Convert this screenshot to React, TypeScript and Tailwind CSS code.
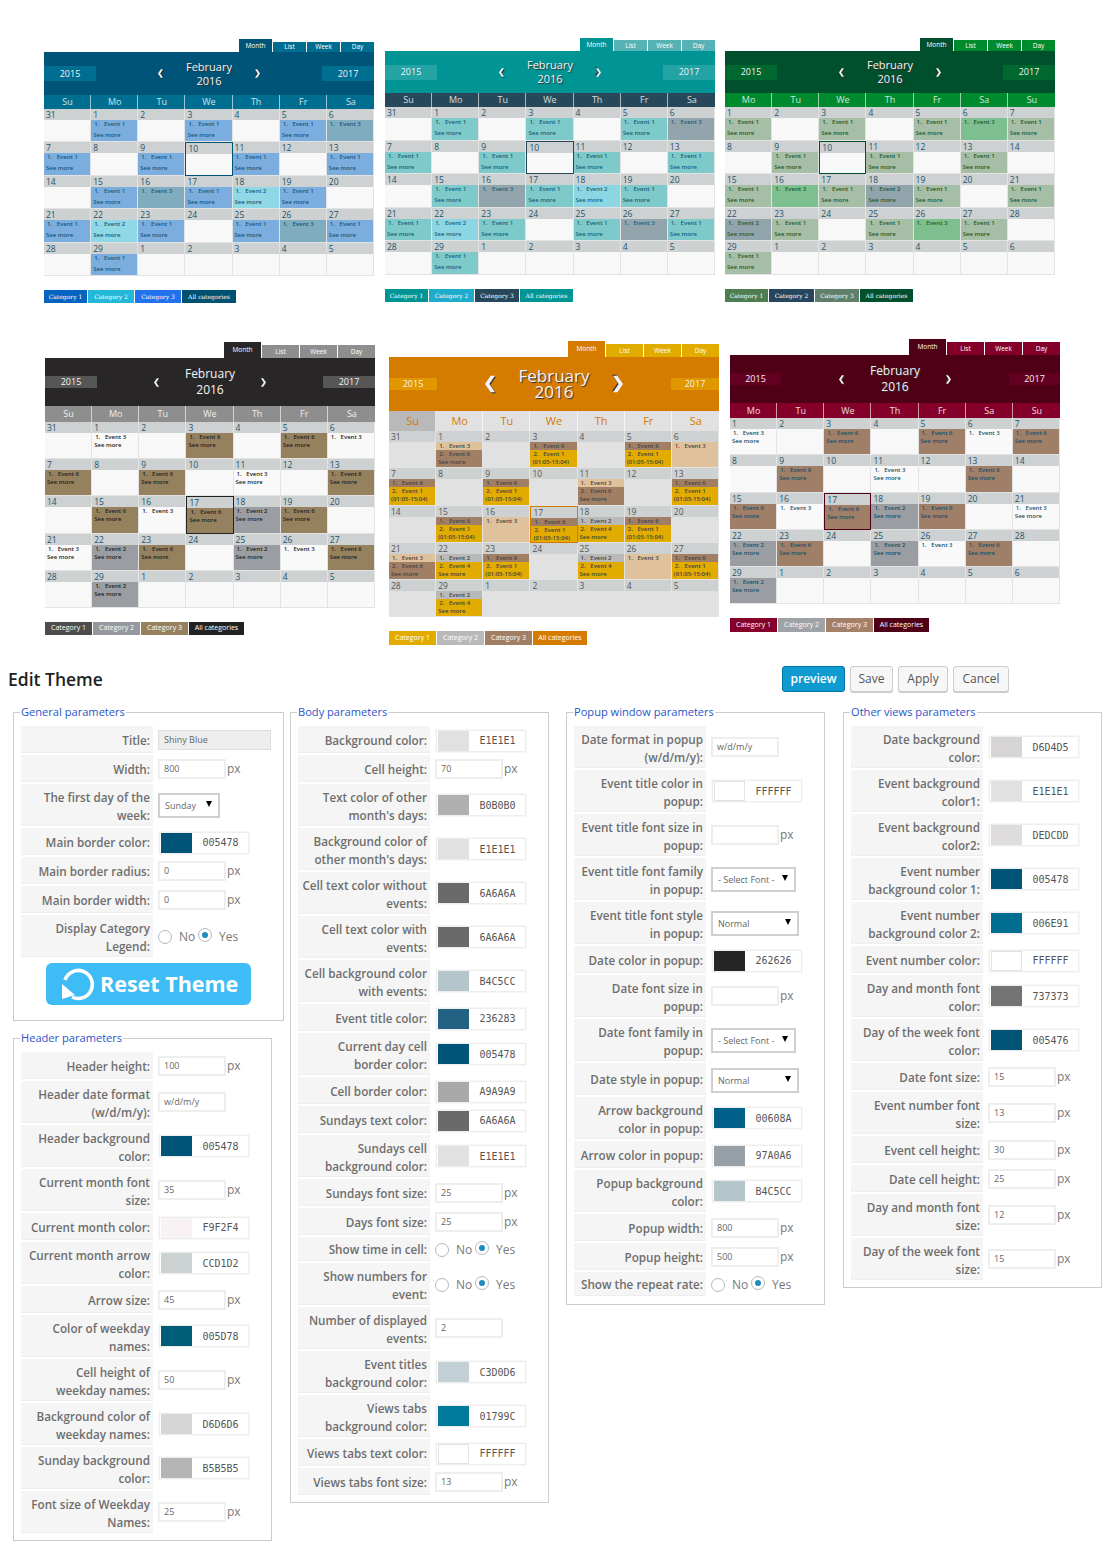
import { useMemo, type ReactNode } from 'react';

const openSans = "[font-family:'Open_Sans',sans-serif]";
const serifLegend = "[font-family:'DejaVu_Serif',serif] text-[6px]";
const sansLegend = "[font-family:'Open_Sans',sans-serif] text-[7px]";

type Theme = {
  id: string;
  place: string;
  firstDay: 'su' | 'mo';
  current: number;
  variant: 'plain' | 'dual';
  events: 'a' | 'b';
  tabRow: string;
  tabActive: string;
  tab: string;
  header: string;
  year: string;
  arrows: string;
  arrow: string;
  title: string;
  week: string;
  weekText: string;
  sunday?: string;
  cell: string;
  cellH: string;
  dateText: string;
  eventText: string;
  currentBorder: string;
  colors: Record<number, string>;
  legendFont: string;
  legendMt: string;
  legend: { label: string; cls: string }[];
};

const THEMES: Theme[] = [
  {
    id: 'blue', place: 'ml-[44px] mt-[39px]', firstDay: 'su', current: 10, variant: 'plain', events: 'a',
    tabRow: 'h-[13px]', tabActive: 'w-[33px] h-[13px] bg-[#005478] text-white', tab: 'w-[33px] h-[10px] bg-[#006e91] text-white',
    header: 'h-[43px] bg-[#005478]', year: 'w-[52px] h-[15px] bg-[#006e91]', arrows: 'w-[102px]', arrow: 'w-[5px] h-[9px]',
    title: 'text-[11px] leading-[14px]', week: 'h-[13.5px] bg-[#006e91]', weekText: 'text-white/80', cell: 'bg-[#f8f8f8]', cellH: 'h-[33.6px]',
    dateText: 'text-[#22536b]', eventText: 'text-[#17587a]', currentBorder: 'border-[#005478]',
    colors: { 1: 'bg-[#7badde]', 2: 'bg-[#8fd8e5]', 3: 'bg-[#7fadbf]' },
    legendFont: serifLegend, legendMt: 'mt-[14px] h-[13px]',
    legend: [
      { label: 'Category 1', cls: 'w-[43px] bg-[#0563c1]' }, { label: 'Category 2', cls: 'w-[46px] bg-[#23b7d8]' },
      { label: 'Category 3', cls: 'w-[46px] bg-[#2272ee]' }, { label: 'All categories', cls: 'w-[54px] bg-[#00506f]' },
    ],
  },
  {
    id: 'teal', place: 'ml-[11px] mt-[38px]', firstDay: 'su', current: 10, variant: 'plain', events: 'a',
    tabRow: 'h-[13px]', tabActive: 'w-[33px] h-[13px] bg-[#009494] text-white', tab: 'w-[33px] h-[11px] bg-[#55b2b5] text-white',
    header: 'h-[42px] bg-[#009494]', year: 'w-[52px] h-[15px] bg-[#23a3a4]', arrows: 'w-[102px]', arrow: 'w-[5px] h-[9px]',
    title: 'text-[11px] leading-[14px]', week: 'h-[14px] bg-[#27485a]', weekText: 'text-white/80', cell: 'bg-[#f8f8f8]', cellH: 'h-[33.6px]',
    dateText: 'text-[#22536b]', eventText: 'text-[#17607a]', currentBorder: 'border-[#26475a]',
    colors: { 1: 'bg-[#7ecaca]', 2: 'bg-[#8cd6e4]', 3: 'bg-[#92a4ac]' },
    legendFont: serifLegend, legendMt: 'mt-[14px] h-[13px]',
    legend: [
      { label: 'Category 1', cls: 'w-[43px] bg-[#009494]' }, { label: 'Category 2', cls: 'w-[45px] bg-[#1eaccd]' },
      { label: 'Category 3', cls: 'w-[44px] bg-[#26475a]' }, { label: 'All categories', cls: 'w-[53px] bg-[#009494]' },
    ],
  },
  {
    id: 'green', place: 'ml-[10px] mt-[38px]', firstDay: 'mo', current: 10, variant: 'plain', events: 'a',
    tabRow: 'h-[13px]', tabActive: 'w-[33px] h-[13px] bg-[#004f2d] text-white', tab: 'w-[33px] h-[11px] bg-[#008a2e] text-white',
    header: 'h-[42px] bg-[#004f2d]', year: 'w-[52px] h-[15px] bg-[#00682e]', arrows: 'w-[102px]', arrow: 'w-[5px] h-[9px]',
    title: 'text-[11px] leading-[14px]', week: 'h-[14px] bg-[#008a2e]', weekText: 'text-white/80', cell: 'bg-[#f8f8f8]', cellH: 'h-[33.6px]',
    dateText: 'text-[#22536b]', eventText: 'text-[#1d5a2a]', currentBorder: 'border-[#004f2d]',
    colors: { 1: 'bg-[#a6bda6]', 2: 'bg-[#91a4ac]', 3: 'bg-[#7dbf8e]' },
    legendFont: serifLegend, legendMt: 'mt-[14px] h-[13px]',
    legend: [
      { label: 'Category 1', cls: 'w-[43px] bg-[#4d7d50]' }, { label: 'Category 2', cls: 'w-[45px] bg-[#24475e]' },
      { label: 'Category 3', cls: 'w-[44px] bg-[#5f7f69]' }, { label: 'All categories', cls: 'w-[53px] bg-[#004f2d]' },
    ],
  },
  {
    id: 'dark', place: 'ml-[45px] mt-[3px]', firstDay: 'su', current: 17, variant: 'plain', events: 'b',
    tabRow: 'h-[16px]', tabActive: 'w-[37px] h-[16px] bg-[#282627] text-white', tab: 'w-[37px] h-[13px] bg-[#8e8e8e] text-white',
    header: 'h-[48px] bg-[#282627]', year: 'w-[52px] h-[12px] bg-[#565656]', arrows: 'w-[112px]', arrow: 'w-[5px] h-[9px]',
    title: 'text-[12px] leading-[16px]', week: 'h-[16px] bg-[#8e8e8e]', weekText: 'text-white/85', cell: 'bg-[#f8f8f8]', cellH: 'h-[37.2px]',
    dateText: 'text-[#22536b]', eventText: 'text-[#222222]', currentBorder: 'border-[#222222]',
    colors: { 2: 'bg-[#9a9ea2]', 3: 'bg-[#f9f9f9]', 6: 'bg-[#96815e]' },
    legendFont: sansLegend, legendMt: 'mt-[14px] h-[13px]',
    legend: [
      { label: 'Category 1', cls: 'w-[47px] bg-[#4d4d4d]' }, { label: 'Category 2', cls: 'w-[47px] bg-[#95999d]' },
      { label: 'Category 3', cls: 'w-[47px] bg-[#96815e]' }, { label: 'All categories', cls: 'w-[55px] bg-[#222222]' },
    ],
  },
  {
    id: 'orange', place: 'ml-[14px] mt-[2px]', firstDay: 'su', current: 17, variant: 'dual', events: 'b',
    tabRow: 'h-[16px]', tabActive: 'w-[37px] h-[16px] bg-[#d57c00] text-white', tab: 'w-[37px] h-[13px] bg-[#e1ab00] text-white',
    header: 'h-[54px] bg-[#d57c00]', year: 'w-[48px] h-[12px] bg-[#e19700]', arrows: 'w-[138px]', arrow: 'w-[10px] h-[18px]',
    title: 'text-[17px] leading-[16px]', week: 'h-[20px] bg-[#e1e1e1]', weekText: 'text-[#d57c00] text-[11px]', sunday: 'bg-[#b9b9b9]', cell: 'bg-[#e1e1e1]', cellH: 'h-[37.3px]',
    dateText: 'text-[#555555]', eventText: 'text-[#444444]', currentBorder: 'border-[#d57c00]',
    colors: { 1: 'bg-[#e1ab00]', 2: 'bg-[#b9b9b9]', 3: 'bg-[#dfc29b]', 4: 'bg-[#e1ab00]', 6: 'bg-[#a07f65]' },
    legendFont: sansLegend, legendMt: 'mt-[14px] h-[14px]',
    legend: [
      { label: 'Category 1', cls: 'w-[47px] bg-[#e1ab00]' }, { label: 'Category 2', cls: 'w-[47px] bg-[#b9b9b9]' },
      { label: 'Category 3', cls: 'w-[47px] bg-[#a07f65]' }, { label: 'All categories', cls: 'w-[54px] bg-[#d57c00]' },
    ],
  },
  {
    id: 'wine', place: 'ml-[11px] mt-0', firstDay: 'mo', current: 17, variant: 'plain', events: 'b',
    tabRow: 'h-[16px]', tabActive: 'w-[37px] h-[16px] bg-[#4f0016] text-white', tab: 'w-[37px] h-[13px] bg-[#84002a] text-white',
    header: 'h-[48px] bg-[#4f0016]', year: 'w-[51px] h-[12px] bg-[#630021]', arrows: 'w-[112px]', arrow: 'w-[5px] h-[9px]',
    title: 'text-[12px] leading-[16px]', week: 'h-[15px] bg-[#84002a]', weekText: 'text-white/85', cell: 'bg-[#f8f8f8]', cellH: 'h-[37.3px]',
    dateText: 'text-[#22536b]', eventText: 'text-[#15506b]', currentBorder: 'border-[#4f0016]',
    colors: { 2: 'bg-[#9a9ea2]', 3: 'bg-[#f9f9f9]', 6: 'bg-[#9f7f67]' },
    legendFont: sansLegend, legendMt: 'mt-[14px] h-[14px]',
    legend: [
      { label: 'Category 1', cls: 'w-[47px] bg-[#84002a]' }, { label: 'Category 2', cls: 'w-[47px] bg-[#9fa3a7]' },
      { label: 'Category 3', cls: 'w-[47px] bg-[#a58068]' }, { label: 'All categories', cls: 'w-[55px] bg-[#4f0016]' },
    ],
  },
];

const EVENTS_A: Record<number, number> = { 1: 1, 3: 1, 5: 1, 6: 3, 7: 1, 9: 1, 11: 1, 13: 1, 15: 1, 16: 3, 17: 1, 18: 2, 19: 1, 21: 1, 22: 2, 23: 1, 25: 1, 26: 3, 27: 1, 29: 1 };
const EVENTS_B: Record<number, number> = { 1: 3, 3: 6, 5: 6, 6: 3, 7: 6, 9: 6, 11: 3, 13: 6, 15: 6, 16: 3, 17: 6, 18: 2, 19: 6, 21: 3, 22: 2, 23: 6, 25: 2, 26: 3, 27: 6, 29: 2 };
const SECOND: Record<number, number> = { 3: 6, 6: 1, 2: 4 };
// these days hold one event only, so there is nothing to "see more" of
const SINGLE_DAYS = [6, 16, 26];

const Arrow = ({ cls, flip }: { cls: string; flip?: boolean }) => (
  <svg viewBox="0 0 6 10" className={`${cls} ${flip ? 'rotate-180' : ''} [filter:drop-shadow(1px_1px_0_#333)]`}>
    <path d="M6 0 2.6 5 6 10H3.4L0 5 3.4 0Z" fill="#f4f2f4" />
  </svg>
);

const PlainEvent = ({ theme, day }: { theme: Theme; day: number }) => {
  const ev = (theme.events === 'a' ? EVENTS_A : EVENTS_B)[day];
  const roomy = theme.events === 'a';
  return (
    <div className={`h-full ${theme.colors[ev]} ${theme.eventText} pl-[2px] text-[6px] font-semibold leading-[8px]`}>
      <div className="pl-[1px]">1.&nbsp;&nbsp;&nbsp;Event {ev}</div>
      {!SINGLE_DAYS.includes(day) && <div className={roomy ? 'mt-[3px]' : ''}>See more</div>}
    </div>
  );
};

const DualEvent = ({ theme, day }: { theme: Theme; day: number }) => {
  const ev = EVENTS_B[day];
  if (SINGLE_DAYS.includes(day)) {
    return <div className={`h-full ${theme.colors[3]} ${theme.eventText} pl-[3px] text-[6px] font-semibold leading-[8px]`}>1.&nbsp;&nbsp;&nbsp;Event 3</div>;
  }
  const next = SECOND[ev];
  return (
    <div className={`flex h-full flex-col ${theme.eventText} text-[6px] font-semibold leading-[8px]`}>
      <div className={`h-[8px] pl-[3px] ${theme.colors[ev]}`}>1.&nbsp;&nbsp;&nbsp;Event {ev}</div>
      <div className={`flex-1 pl-[3px] ${theme.colors[next]}`}>
        2.&nbsp;&nbsp;&nbsp;Event {next}
        <div className="-ml-[1px]">{next === 1 ? '(01:05-15:04)' : 'See more'}</div>
      </div>
    </div>
  );
};

const Calendar = ({ theme }: { theme: Theme }) => {
  const weekdays = theme.firstDay === 'su' ? ['Su', 'Mo', 'Tu', 'We', 'Th', 'Fr', 'Sa'] : ['Mo', 'Tu', 'We', 'Th', 'Fr', 'Sa', 'Su'];

  const days = useMemo(() => {
    const list: { day: number; inMonth: boolean }[] = [];
    if (theme.firstDay === 'su') list.push({ day: 31, inMonth: false });
    for (let d = 1; d <= 29; d++) list.push({ day: d, inMonth: true });
    let n = 1;
    while (list.length < 35) list.push({ day: n++, inMonth: false });
    return list;
  }, [theme.firstDay]);

  const map = theme.events === 'a' ? EVENTS_A : EVENTS_B;

  return (
    <div className={`w-[330px] shrink-0 ${theme.place} ${openSans}`}>
      <div className={`flex items-end justify-end gap-px ${theme.tabRow}`}>
        {['Month', 'List', 'Week', 'Day'].map((t, i) => (
          <div key={t} className={`flex items-center justify-center text-[6.5px] ${i === 0 ? theme.tabActive : theme.tab}`}>{t}</div>
        ))}
      </div>
      <div className={`flex items-center justify-between text-[#f4f2f4] ${theme.header}`}>
        <div className={`flex items-center justify-center text-[9px] ${theme.year}`}>2015</div>
        <div className={`flex items-center justify-between ${theme.arrows}`}>
          <Arrow cls={theme.arrow} />
          <div className={`text-center [text-shadow:1px_1px_1px_#333] ${theme.title}`}>February<br />2016</div>
          <Arrow cls={theme.arrow} flip />
        </div>
        <div className={`flex items-center justify-center text-[9px] ${theme.year}`}>2017</div>
      </div>
      <div className={`grid grid-cols-7 ${theme.week}`}>
        {weekdays.map((w) => (
          <div key={w} className={`flex items-center justify-center border-r border-white/60 pl-[1px] text-[9px] last:border-r-0 ${theme.weekText} ${w === 'Su' && theme.sunday ? theme.sunday : ''}`}>{w}</div>
        ))}
      </div>
      <div className="grid grid-cols-7">
        {days.map(({ day, inMonth }, i) => {
          const isCurrent = inMonth && day === theme.current;
          const hasEvent = inMonth && map[day] !== undefined;
          return (
            <div key={i} className={`flex flex-col ${theme.cellH} ${theme.cell} ${isCurrent ? `border ${theme.currentBorder}` : 'border-b border-r border-[#e3e3e3]'}`}>
              <div className={`h-[11px] shrink-0 bg-[#cdd1d2] pl-[2px] text-[8.5px] leading-[11px] ${theme.dateText}`}>{day}</div>
              <div className="min-h-0 flex-1">
                {hasEvent && (theme.variant === 'dual' ? <DualEvent theme={theme} day={day} /> : <PlainEvent theme={theme} day={day} />)}
              </div>
            </div>
          );
        })}
      </div>
      <div className={`flex gap-px ${theme.legendMt}`}>
        {theme.legend.map((l) => (
          <div key={l.label} className={`flex items-center justify-center text-white ${l.cls} ${theme.legendFont}`}>{l.label}</div>
        ))}
      </div>
    </div>
  );
};

type Field =
  | { label: string; kind: 'text'; value?: string; px?: boolean; w?: string; short?: boolean }
  | { label: string; kind: 'color'; value: string; swatch: string }
  | { label: string; kind: 'select'; value: string; w: string; tall?: boolean }
  | { label: string; kind: 'radio'; short?: boolean };

const c = (label: string, value: string, swatch: string): Field => ({ label, kind: 'color', value, swatch });
const t = (label: string, value = ''): Field => ({ label, kind: 'text', value, px: true });

const GENERAL: Field[] = [
  { label: 'Title:', kind: 'text', value: 'Shiny Blue', w: 'title' },
  t('Width:', '800'),
  { label: 'The first day of the\nweek:', kind: 'select', value: 'Sunday', w: 'w-[62px]' },
  c('Main border color:', '005478', 'bg-[#005478]'),
  t('Main border radius:', '0'),
  t('Main border width:', '0'),
  { label: 'Display Category\nLegend:', kind: 'radio' },
];

const HEADER: Field[] = [
  t('Header height:', '100'),
  { label: 'Header date format\n(w/d/m/y):', kind: 'text', value: 'w/d/m/y' },
  c('Header background\ncolor:', '005478', 'bg-[#005478]'),
  t('Current month font\nsize:', '35'),
  c('Current month color:', 'F9F2F4', 'bg-[#f9f2f4]'),
  c('Current month arrow\ncolor:', 'CCD1D2', 'bg-[#ccd1d2]'),
  t('Arrow size:', '45'),
  c('Color of weekday\nnames:', '005D78', 'bg-[#005d78]'),
  t('Cell height of\nweekday names:', '50'),
  c('Background color of\nweekday names:', 'D6D6D6', 'bg-[#d6d6d6]'),
  c('Sunday background\ncolor:', 'B5B5B5', 'bg-[#b5b5b5]'),
  t('Font size of Weekday\nNames:', '25'),
];

const BODY: Field[] = [
  c('Background color:', 'E1E1E1', 'bg-[#e1e1e1]'),
  t('Cell height:', '70'),
  c('Text color of other\nmonth\'s days:', 'B0B0B0', 'bg-[#b0b0b0]'),
  c('Background color of\nother month\'s days:', 'E1E1E1', 'bg-[#e1e1e1]'),
  c('Cell text color without\nevents:', '6A6A6A', 'bg-[#6a6a6a]'),
  c('Cell text color with\nevents:', '6A6A6A', 'bg-[#6a6a6a]'),
  c('Cell background color\nwith events:', 'B4C5CC', 'bg-[#b4c5cc]'),
  c('Event title color:', '236283', 'bg-[#236283]'),
  c('Current day cell\nborder color:', '005478', 'bg-[#005478]'),
  c('Cell border color:', 'A9A9A9', 'bg-[#a9a9a9]'),
  c('Sundays text color:', '6A6A6A', 'bg-[#6a6a6a]'),
  c('Sundays cell\nbackground color:', 'E1E1E1', 'bg-[#e1e1e1]'),
  t('Sundays font size:', '25'),
  t('Days font size:', '25'),
  { label: 'Show time in cell:', kind: 'radio', short: true },
  { label: 'Show numbers for\nevent:', kind: 'radio' },
  { label: 'Number of displayed\nevents:', kind: 'text', value: '2' },
  c('Event titles\nbackground color:', 'C3D0D6', 'bg-[#c3d0d6]'),
  c('Views tabs\nbackground color:', '01799C', 'bg-[#01799c]'),
  c('Views tabs text color:', 'FFFFFF', 'bg-white border border-[#e2e2e2]'),
  t('Views tabs font size:', '13'),
];

const POPUP: Field[] = [
  { label: 'Date format in popup\n(w/d/m/y):', kind: 'text', value: 'w/d/m/y' },
  c('Event title color in\npopup:', 'FFFFFF', 'bg-white border border-[#e2e2e2]'),
  t('Event title font size in\npopup:'),
  { label: 'Event title font family\nin popup:', kind: 'select', value: '- Select Font -', w: 'w-[85px]' },
  { label: 'Event title font style\nin popup:', kind: 'select', value: 'Normal', w: 'w-[88px]' },
  c('Date color in popup:', '262626', 'bg-[#262626]'),
  t('Date font size in\npopup:'),
  { label: 'Date font family in\npopup:', kind: 'select', value: '- Select Font -', w: 'w-[85px]' },
  { label: 'Date style in popup:', kind: 'select', value: 'Normal', w: 'w-[88px]', tall: true },
  c('Arrow background\ncolor in popup:', '00608A', 'bg-[#00608a]'),
  c('Arrow color in popup:', '97A0A6', 'bg-[#97a0a6]'),
  c('Popup background\ncolor:', 'B4C5CC', 'bg-[#b4c5cc]'),
  t('Popup width:', '800'),
  t('Popup height:', '500'),
  { label: 'Show the repeat rate:', kind: 'radio', short: true },
];

const OTHER: Field[] = [
  c('Date background\ncolor:', 'D6D4D5', 'bg-[#d6d4d5]'),
  c('Event background\ncolor1:', 'E1E1E1', 'bg-[#e1e1e1]'),
  c('Event background\ncolor2:', 'DEDCDD', 'bg-[#dedcdd]'),
  c('Event number\nbackground color 1:', '005478', 'bg-[#005478]'),
  c('Event number\nbackground color 2:', '006E91', 'bg-[#006e91]'),
  c('Event number color:', 'FFFFFF', 'bg-white border border-[#e2e2e2]'),
  c('Day and month font\ncolor:', '737373', 'bg-[#737373]'),
  c('Day of the week font\ncolor:', '005476', 'bg-[#005476]'),
  t('Date font size:', '15'),
  t('Event number font\nsize:', '13'),
  t('Event cell height:', '30'),
  t('Date cell height:', '25'),
  t('Day and month font\nsize:', '12'),
  t('Day of the week font\nsize:', '15'),
];

const FieldValue = ({ field }: { field: Field }) => {
  if (field.kind === 'color') {
    const single = !field.label.includes('\n');
    return (
      <div className={`ml-[1px] flex h-[22px] w-[90px] items-center border border-[#eeeeee] bg-white pl-[1px] shadow-[0_0_1px_#ccc] ${single ? 'mt-[2px]' : ''}`}>
        <div className={`h-[20px] w-[31px] ${field.swatch}`} />
        <div className="flex-1 pl-[1px] text-center [font-family:'DejaVu_Sans_Mono',monospace] text-[10px] text-[#555555]">{field.value}</div>
      </div>
    );
  }
  if (field.kind === 'select') {
    return (
      <div className={`flex h-[25px] items-center justify-between border-2 border-[#cfcfcf] bg-white pl-[5px] pr-[6px] pt-[1px] text-[9px] text-[#666666] ${field.w} ${field.tall ? 'mt-[2px]' : ''}`}>
        <span>{field.value}</span>
        <svg viewBox="0 0 6 6" className="-mt-[3px] h-[6px] w-[6px]"><path d="M0 0h6L3 6z" fill="#000" /></svg>
      </div>
    );
  }
  if (field.kind === 'radio') {
    return (
      <div className="flex items-center text-[12px] font-normal text-[#777777]">
        <span className="mt-[1px] h-[14px] w-[14px] rounded-full border border-[#b4b9be] bg-white" />
        <span className="ml-[7px] mt-[1px] w-[19px]">No</span>
        <span className="-mt-[2px] flex h-[14px] w-[14px] items-center justify-center rounded-full border border-[#b4b9be] bg-white">
          <span className="h-[6px] w-[6px] rounded-full bg-[#1e8cbe]" />
        </span>
        <span className="ml-[7px] mt-[1px]">Yes</span>
      </div>
    );
  }
  if (field.w === 'title') {
    return <div className="flex h-[20px] w-[113px] items-center border border-[#dddddd] bg-[#eeeeee] pl-[5px] text-[9px] text-[#666666]">{field.value}</div>;
  }
  return (
    <div className="flex items-center">
      <div className="flex h-[20px] w-[68px] items-center border-2 border-[#eeeeee] bg-white pl-[4px] text-[9px] text-[#666666]">{field.value}</div>
      {field.px && <span className="ml-[1px] text-[12px] text-[#777777]">px</span>}
    </div>
  );
};

const FieldRow = ({ field }: { field: Field }) => {
  const twoLines = field.label.includes('\n');
  const isShort = field.kind === 'radio' && field.short;
  const isTall = field.kind === 'select' && field.tall;
  const h = twoLines ? 'h-[42px]' : isShort ? 'h-[24px]' : isTall ? 'h-[32px]' : 'h-[27px]';
  return (
    <div className={`mb-[2px] flex ${h}`}>
      <div className={`flex w-[132px] shrink-0 items-center justify-end whitespace-pre-line border-b border-[#eeeeee] bg-[#f5f5f5] pr-[3px] text-right text-[11.7px] font-semibold leading-[18px] text-[#6e6e6e] ${twoLines ? 'pt-[3px]' : 'pt-[1px]'}`}>
        {field.label}
      </div>
      <div className="ml-[5px] flex items-center">
        <FieldValue field={field} />
      </div>
    </div>
  );
};

const Group = ({ title, fields, cls, children }: { title: string; fields: Field[]; cls: string; children?: ReactNode }) => (
  <fieldset className={`border border-[#cccccc] px-[7px] pt-[6px] ${cls}`}>
    <legend className="-ml-[1px] h-[16px] px-[1px] text-[11.1px] leading-[16px] text-[#2a54c8]">{title}</legend>
    {fields.map((f) => <FieldRow key={f.label} field={f} />)}
    {children}
  </fieldset>
);

const ResetButton = () => (
  <div className="ml-[25px] mt-[6px] flex h-[42px] w-[205px] items-center rounded-[6px] bg-[#3dbcf6] pl-[14px] text-white">
    <svg viewBox="0 0 36 36" className="h-[36px] w-[36px]" fill="none">
      <path d="M5 14A14 14 0 1 1 12 31" stroke="white" strokeWidth="3.6" />
      <path d="M2 18V33L15 29z" fill="white" />
    </svg>
    <span className="ml-[4px] text-[21.5px] font-bold">Reset Theme</span>
  </div>
);

const ThemeEditor = () => (
  <div className={openSans}>
    <div className="flex h-[26px] items-center justify-between pl-[8px] pr-[106px]">
      <h1 className="text-[17.5px] font-semibold text-[#222222]">Edit Theme</h1>
      <div className="flex gap-[5px] text-[12px]">
        <button className="h-[26px] w-[63px] rounded-[3px] border border-[#0073aa] bg-[#0f9bd0] font-semibold text-white">preview</button>
        <button className="h-[26px] w-[43px] rounded-[3px] border border-[#cccccc] bg-[#f7f7f7] text-[#555555] shadow-[0_1px_0_#ccc]">Save</button>
        <button className="h-[26px] w-[50px] rounded-[3px] border border-[#cccccc] bg-[#f7f7f7] text-[#555555] shadow-[0_1px_0_#ccc]">Apply</button>
        <button className="h-[26px] w-[56px] rounded-[3px] border border-[#cccccc] bg-[#f7f7f7] text-[#555555] shadow-[0_1px_0_#ccc]">Cancel</button>
      </div>
    </div>
    <div className="mt-[12px] flex pl-[13px]">
      <div className="w-[277px] shrink-0">
        <Group title="General parameters" fields={GENERAL} cls="w-[271px] pb-[15px]"><ResetButton /></Group>
        <Group title="Header parameters" fields={HEADER} cls="mt-[9px] w-[259px] pb-[5px]" />
      </div>
      <div className="w-[276px] shrink-0">
        <Group title="Body parameters" fields={BODY} cls="w-[259px] pb-[5px]" />
      </div>
      <div className="w-[277px] shrink-0">
        <Group title="Popup window parameters" fields={POPUP} cls="w-[259px] pb-[6px]" />
      </div>
      <div className="w-[259px] shrink-0">
        <Group title="Other views parameters" fields={OTHER} cls="w-[259px] pb-[5px]" />
      </div>
    </div>
  </div>
);

export default function App() {
  return (
    <div className="h-[1550px] w-[1115px] overflow-hidden bg-white">
      <div className="flex h-[339px] items-start">
        {THEMES.slice(0, 3).map((theme) => <Calendar key={theme.id} theme={theme} />)}
      </div>
      <div className="flex h-[327px] items-start">
        {THEMES.slice(3).map((theme) => <Calendar key={theme.id} theme={theme} />)}
      </div>
      <ThemeEditor />
    </div>
  );
}
